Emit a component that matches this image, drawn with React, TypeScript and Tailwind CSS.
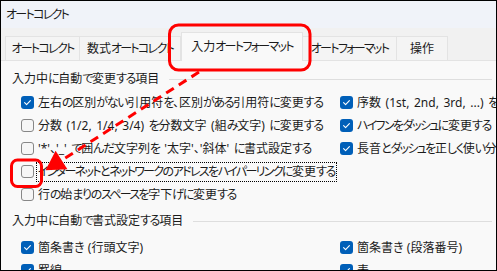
import React from "react";

type Item = { label: string; checked: boolean; focus?: boolean };
type Row = [Item | null, Item | null];

const section1: Row[] = [
  [
    { label: "左右の区別がない引用符を、区別がある引用符に変更する", checked: true },
    { label: "序数 (1st, 2nd, 3rd, ...) を上付き文字に変更する", checked: true },
  ],
  [
    { label: "分数 (1/2, 1/4, 3/4) を分数文字 (組み文字) に変更する", checked: false },
    { label: "ハイフンをダッシュに変更する", checked: true },
  ],
  [
    { label: "'*'、'_' で囲んだ文字列を '太字'、'斜体' に書式設定する", checked: false },
    { label: "長音とダッシュを正しく使い分ける", checked: true },
  ],
  [{ label: "インターネットとネットワークのアドレスをハイパーリンクに変更する", checked: false, focus: true }, null],
  [{ label: "行の始まりのスペースを字下げに変更する", checked: false }, null],
];

const section2: Row[] = [
  [
    { label: "箇条書き (行頭文字)", checked: true },
    { label: "箇条書き (段落番号)", checked: true },
  ],
  [
    { label: "罫線", checked: true },
    { label: "表", checked: true },
  ],
];

const tabs = [
  { label: "オートコレクト", w: "w-[75px]" },
  { label: "数式オートコレクト", w: "w-[101px]" },
  { label: "入力オートフォーマット", w: "w-[122px]", active: true },
  { label: "オートフォーマット", w: "w-[94px]" },
  { label: "操作", w: "w-[51px]" },
];

// kana in the UI font are narrower than in Noto CJK, tighten them
function Jp({ text }: { text: string }) {
  const parts = text.split(/([\u3040-\u309f]+|[\u30a0-\u30ff]+)/);
  return (
    <>
      {parts.map((p, i) => {
        if (i % 2 === 0) return <React.Fragment key={i}>{p}</React.Fragment>;
        const hira = p.charCodeAt(0) < 0x30a0;
        return (
          <span key={i} className={hira ? "tracking-[-1.3px]" : "tracking-[-1.7px]"}>
            {p}
          </span>
        );
      })}
    </>
  );
}

function CheckBox({ checked }: { checked: boolean }) {
  if (checked) {
    return (
      <span className="flex h-[13px] w-[13px] shrink-0 items-center justify-center rounded-[3px] bg-[#005fb8]">
        <svg width="13" height="13" viewBox="0 0 13 13" fill="none">
          <path d="M3.6 6.7 L5.6 8.6 L9.4 4.6" stroke="white" strokeWidth="1.1" strokeLinecap="round" strokeLinejoin="round" />
        </svg>
      </span>
    );
  }
  return <span className="h-[13px] w-[13px] shrink-0 rounded-[3px] border border-[#878787] bg-[#f6f6f6]" />;
}

function Option({ item }: { item: Item | null }) {
  if (!item) return <div />;
  return (
    <div className="flex h-[23px] items-center gap-[2px]">
      <CheckBox checked={item.checked} />
      <span
        className={
          item.focus
            ? "whitespace-nowrap border border-dotted border-black px-px leading-[18px] [word-spacing:1.5px]"
            : "whitespace-nowrap border border-transparent px-px leading-[18px] [word-spacing:1.5px]"
        }
      >
        <Jp text={item.label} />
      </span>
    </div>
  );
}

function Heading({ title }: { title: string }) {
  return (
    <div className="flex h-[18px] items-center pl-[11px] pr-[4px]">
      <span className="whitespace-nowrap">
        <Jp text={title} />
      </span>
      <span className="ml-[10px] h-px flex-1 bg-[#dedede]" />
    </div>
  );
}

function Options({ rows }: { rows: Row[] }) {
  return (
    <div className="grid grid-cols-[319px_1fr] pl-[20px]">
      {rows.map((r, i) => (
        <React.Fragment key={i}>
          <Option item={r[0]} />
          <Option item={r[1]} />
        </React.Fragment>
      ))}
    </div>
  );
}

export default function App() {
  return (
    <div className="relative h-[271px] w-[497px] overflow-hidden border border-black bg-[#f1f1f1] font-['Noto_Sans','Noto_Sans_CJK_JP',sans-serif] text-[12px] text-[#1b1b1b] [font-feature-settings:'palt']">
      <div className="flex h-[27px] items-center bg-[#f0f3f9] pl-[5px]">
        <Jp text="オートコレクト" />
      </div>

      <div className="flex h-[33px] items-end border-b border-[#e3e3e3] pl-[4px]">
        {tabs.map((t) =>
          t.active ? (
            <div
              key={t.label}
              className={`${t.w} relative z-10 -mb-px flex h-[29px] items-center justify-center border-x border-t border-[#e3e3e3] bg-[#f9f9f9] whitespace-nowrap`}
            >
              <Jp text={t.label} />
            </div>
          ) : (
            <div
              key={t.label}
              className={`${t.w} -mb-px flex h-[25px] items-center justify-center overflow-hidden border border-l-0 border-[#e3e3e3] bg-[#f4f4f4] whitespace-nowrap first:border-l`}
            >
              <Jp text={t.label} />
            </div>
          )
        )}
      </div>

      <div className="h-full bg-[#f9f9f9] pt-[9px]">
        <Heading title="入力中に自動で変更する項目" />
        <div className="mt-[3px]">
          <Options rows={section1} />
        </div>
        <div className="mt-[6px]">
          <Heading title="入力中に自動で書式設定する項目" />
        </div>
        <div className="mt-[6px]">
          <Options rows={section2} />
        </div>
      </div>

      <svg className="pointer-events-none absolute left-[-1px] top-[-1px]" width="497" height="271" viewBox="0 0 497 271" fill="none">
        <rect x="169.5" y="25" width="140.5" height="45" rx="9" stroke="#ff0000" strokeWidth="3" />
        <rect x="11.5" y="160" width="30" height="26.5" rx="6" stroke="#ff0000" strokeWidth="3" />
        <line x1="199" y1="72" x2="63" y2="159.5" stroke="#ff0000" strokeWidth="3" strokeDasharray="9 6" />
        <polygon points="55.6,150.7 67.4,169.3 45.5,170.3" fill="#ff0000" />
      </svg>
    </div>
  );
}
